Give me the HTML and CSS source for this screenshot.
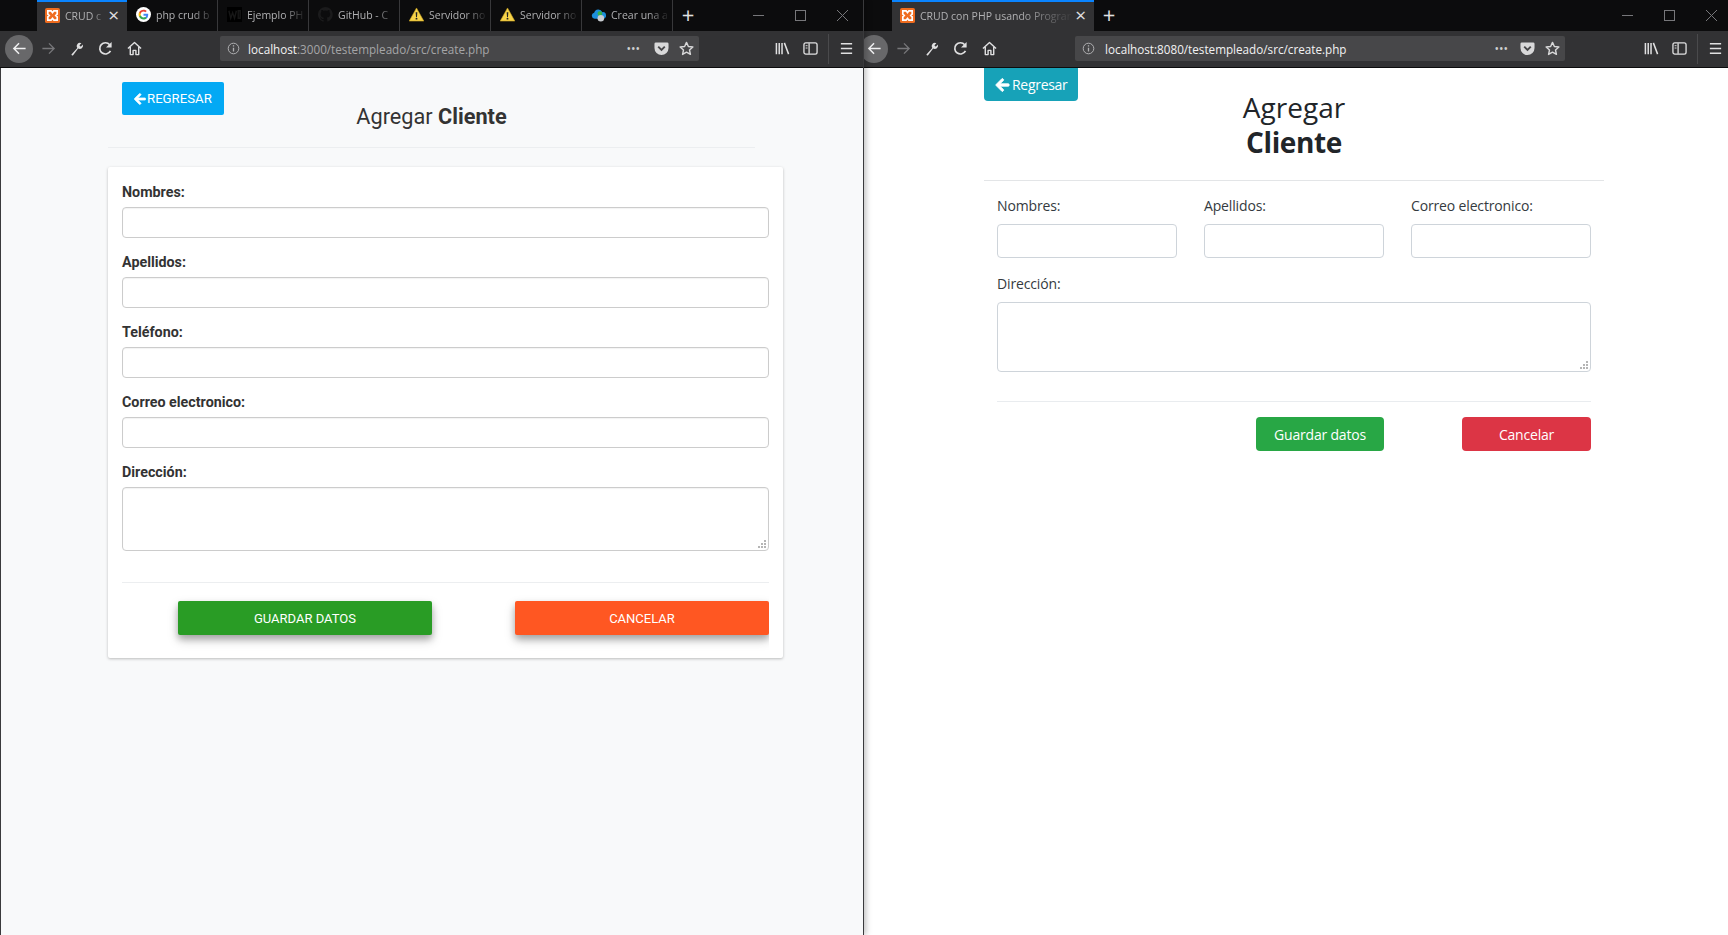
FILE: index.html
```html
<!DOCTYPE html>
<html lang="es">
<head>
    <meta charset="UTF-8">
    <title>Agregar Cliente</title>
    <link rel="stylesheet" href="styles.css">
</head>
<body>

<svg class="sprite" aria-hidden="true">
    <symbol id="i-xampp" viewBox="0 0 16 16">
        <rect width="16" height="16" rx="2" fill="#ef6c1f"/>
        <path d="M3 3h3.500l1.500 2 1.500-2H13v3.500L11.500 8 13 9.500V13H9.500L8 11 6.500 13H3V9.500L4.500 8 3 6.500z" fill="none" stroke="#fff" stroke-width="1.800"/>
    </symbol>
    <symbol id="i-google" viewBox="0 0 16 16">
        <circle cx="8" cy="8" r="8" fill="#fff"/>
        <path d="M13 8.200c0-.4 0-.7-.1-1H8v2h2.900c-.1.700-.5 1.200-1.100 1.600v1.300h1.700c1-.9 1.500-2.300 1.500-3.900z" fill="#4285f4"/>
        <path d="M8 13.200c1.400 0 2.600-.5 3.500-1.300l-1.700-1.300c-.5.300-1.100.5-1.800.5-1.400 0-2.500-.9-2.900-2.200H3.300v1.400c.9 1.700 2.700 2.900 4.700 2.900z" fill="#34a853"/>
        <path d="M5.100 8.900c-.2-.6-.2-1.200 0-1.800V5.700H3.300c-.7 1.500-.7 3.100 0 4.600z" fill="#fbbc05"/>
        <path d="M8 4.900c.8 0 1.500.3 2 .8l1.500-1.500C10.600 3.300 9.400 2.800 8 2.800c-2 0-3.800 1.200-4.700 2.900l1.800 1.400C5.500 5.800 6.600 4.900 8 4.900z" fill="#ea4335"/>
    </symbol>
    <symbol id="i-wix" viewBox="0 0 16 16">
        <rect width="16" height="16" fill="#000"/>
        <path d="M2 4l2 8 2-6 2 6 2-8M12 4h2v8h-2z" fill="none" stroke="#171717" stroke-width="1.500"/>
    </symbol>
    <symbol id="i-github" viewBox="0 0 16 16">
        <path d="M8 0a8 8 0 0 0-2.500 15.600c.4.100.5-.2.500-.4v-1.400c-2.200.5-2.700-1-2.700-1-.4-.9-.9-1.200-.9-1.200-.7-.5.100-.5.100-.5.800.1 1.200.8 1.200.8.700 1.200 1.900.9 2.300.7.100-.5.300-.9.500-1.100-1.800-.2-3.700-.9-3.700-4 0-.9.300-1.600.8-2.100-.1-.2-.4-1 .1-2.100 0 0 .7-.2 2.200.8a7.600 7.600 0 0 1 4 0c1.500-1 2.200-.8 2.200-.8.400 1.100.2 1.900.1 2.100.5.600.8 1.300.8 2.100 0 3.100-1.900 3.700-3.700 3.900.3.300.6.800.6 1.500v2.200c0 .2.100.5.600.4A8 8 0 0 0 8 0z" fill="#1b1b1c"/>
    </symbol>
    <symbol id="i-warn" viewBox="0 0 16 16">
        <path d="M8 1L15.800 15H.2z" fill="#f6d34a" stroke="#c9a21f" stroke-width=".6"/>
        <path d="M7.100 5.500h1.800L8.500 10.800h-1zM7.100 11.700h1.800v1.700H7.100z" fill="#222"/>
    </symbol>
    <symbol id="i-cloud" viewBox="0 0 16 16">
        <path d="M4 12.500a3.300 3.300 0 0 1-.6-6.500A4.500 4.500 0 0 1 12 5.500a3.500 3.500 0 0 1 1 7z" fill="#1c8fdc"/>
        <circle cx="9.500" cy="7" r="2.500" fill="#35b34a"/>
        <circle cx="10.500" cy="12" r="3.500" fill="#c9cdd1"/>
    </symbol>
    <symbol id="i-back" viewBox="0 0 16 16">
        <path d="M14.500 8H2M7.500 2.500L2 8l5.500 5.500" fill="none" stroke="currentColor" stroke-width="1.600"/>
    </symbol>
    <symbol id="i-forward" viewBox="0 0 16 16">
        <path d="M1.500 8H14M8.500 2.500L14 8l-5.500 5.500" fill="none" stroke="currentColor" stroke-width="1.400"/>
    </symbol>
    <symbol id="i-wrench" viewBox="0 0 16 16">
        <path d="M1.500 14.500l6.300-7a3.500 3.500 0 0 1 4.400-5.200L10 4.500l1.500 1.500 2.200-2.200a3.500 3.500 0 0 1-5 4.200l-5.400 7.200a1.300 1.300 0 0 1-1.800-.7z" fill="currentColor"/>
    </symbol>
    <symbol id="i-reload" viewBox="0 0 16 16">
        <path d="M13.300 10.500A6 6 0 1 1 12.500 4" fill="none" stroke="currentColor" stroke-width="1.800"/>
        <path d="M14.500 1v6h-6z" fill="currentColor"/>
    </symbol>
    <symbol id="i-home" viewBox="0 0 16 16">
        <path d="M1 8l7-6.500L15 8M3.500 6.500V14.500h3V10h3v4.500h3V6.500" fill="none" stroke="currentColor" stroke-width="1.500" stroke-linejoin="round"/>
    </symbol>
    <symbol id="i-info" viewBox="0 0 16 16">
        <circle cx="8" cy="8" r="6.500" fill="none" stroke="currentColor" stroke-width="1.200"/>
        <path d="M7.200 7h1.600v4.800H7.200zM7.200 4h1.600v1.600H7.200z" fill="currentColor"/>
    </symbol>
    <symbol id="i-pocket" viewBox="0 0 16 16">
        <path d="M2 1.500h12a1.500 1.500 0 0 1 1.500 1.500v4.500a7.500 7.500 0 0 1-15 0V3A1.500 1.500 0 0 1 2 1.500z" fill="currentColor"/>
        <path d="M4.500 6L8 9.500 11.500 6" fill="none" stroke="#474749" stroke-width="2"/>
    </symbol>
    <symbol id="i-star" viewBox="0 0 16 16">
        <path d="M8 1.500l2 4.400 4.800.5-3.600 3.200 1 4.700L8 11.900l-4.200 2.400 1-4.700L1.200 6.400 6 5.900z" fill="none" stroke="currentColor" stroke-width="1.500" stroke-linejoin="round"/>
    </symbol>
    <symbol id="i-library" viewBox="0 0 16 16">
        <path d="M1.500 2v12M4.500 2v12M7.500 2v12M10 2l4.500 12" fill="none" stroke="currentColor" stroke-width="1.600"/>
    </symbol>
    <symbol id="i-sidebar" viewBox="0 0 16 16">
        <rect x="1" y="2" width="14" height="12" rx="2" fill="none" stroke="currentColor" stroke-width="1.400"/>
        <path d="M6.500 2.500v11" stroke="currentColor" stroke-width="1.400"/>
        <path d="M2.800 5h2M2.800 7.500h2" stroke="currentColor" stroke-width="1"/>
    </symbol>
    <symbol id="i-menu" viewBox="0 0 16 16">
        <path d="M2 3h12M2 8h12M2 13h12" stroke="currentColor" stroke-width="1.700"/>
    </symbol>
    <symbol id="i-arrow" viewBox="-15 -15 478 542">
        <path d="M257.500 445.100l-22.200 22.200c-9.400 9.400-24.600 9.400-33.900 0L7 273c-9.400-9.400-9.400-24.600 0-33.900L201.400 44.700c9.400-9.400 24.600-9.400 33.900 0l22.200 22.200c9.500 9.500 9.300 25-.4 34.300L136.600 216H424c13.300 0 24 10.700 24 24v32c0 13.300-10.700 24-24 24H136.600l120.500 114.800c9.800 9.300 10 24.800.4 34.300z" fill="currentColor" stroke="currentColor" stroke-width="30"/>
    </symbol>
</svg>

<div class="desktop">

    <!-- ventana izquierda: version materialize -->
    <section class="window window-left">
        <div class="tabbar">
            <div class="tab tab-active">
                <svg class="favicon"><use href="#i-xampp"/></svg>
                <span class="tab-title">CRUD c</span>
                <span class="tab-close">&times;</span>
            </div>
            <div class="tab"><svg class="favicon"><use href="#i-google"/></svg><span class="tab-title">php crud b</span></div>
            <div class="tab"><svg class="favicon"><use href="#i-wix"/></svg><span class="tab-title">Ejemplo PH</span></div>
            <div class="tab"><svg class="favicon"><use href="#i-github"/></svg><span class="tab-title">GitHub - C</span></div>
            <div class="tab"><svg class="favicon"><use href="#i-warn"/></svg><span class="tab-title">Servidor no</span></div>
            <div class="tab"><svg class="favicon"><use href="#i-warn"/></svg><span class="tab-title">Servidor no</span></div>
            <div class="tab"><svg class="favicon"><use href="#i-cloud"/></svg><span class="tab-title">Crear una a</span></div>
            <span class="tab-new">+</span>
            <div class="win-controls">
                <span class="win-min"></span>
                <span class="win-max"></span>
                <span class="win-close"></span>
            </div>
        </div>
        <div class="navbar">
            <span class="nav-back"><svg class="icon"><use href="#i-back"/></svg></span>
            <svg class="icon icon-dim"><use href="#i-forward"/></svg>
            <svg class="icon"><use href="#i-wrench"/></svg>
            <svg class="icon"><use href="#i-reload"/></svg>
            <svg class="icon"><use href="#i-home"/></svg>
            <div class="urlbar">
                <svg class="icon-info"><use href="#i-info"/></svg>
                <span class="url"><span class="url-host">localhost</span><span class="url-rest">:3000/testempleado/src/create.php</span></span>
                <span class="url-dots">&bull;&bull;&bull;</span>
                <svg class="icon-url"><use href="#i-pocket"/></svg>
                <svg class="icon-url"><use href="#i-star"/></svg>
            </div>
            <svg class="icon icon-lib"><use href="#i-library"/></svg>
            <svg class="icon icon-side"><use href="#i-sidebar"/></svg>
            <span class="nav-sep"></span>
            <svg class="icon icon-menu"><use href="#i-menu"/></svg>
        </div>
        <main class="page page-left">
            <header class="m-head">
                <a class="m-back"><svg class="m-arrow"><use href="#i-arrow"/></svg>REGRESAR</a>
                <h2 class="m-title">Agregar <b>Cliente</b></h2>
            </header>
            <form class="m-card">
                <label class="m-label">Nombres:</label>
                <input class="m-input" type="text">
                <label class="m-label">Apellidos:</label>
                <input class="m-input" type="text">
                <label class="m-label">Teléfono:</label>
                <input class="m-input" type="text">
                <label class="m-label">Correo electronico:</label>
                <input class="m-input" type="text">
                <label class="m-label">Dirección:</label>
                <textarea class="m-input m-area"></textarea>
                <hr class="m-rule">
                <div class="m-actions">
                    <button type="button" class="m-btn m-green">GUARDAR DATOS</button>
                    <button type="button" class="m-btn m-orange">CANCELAR</button>
                </div>
            </form>
        </main>
    </section>

    <!-- ventana derecha: version bootstrap -->
    <section class="window window-right">
        <div class="tabbar">
            <div class="tab tab-active tab-wide">
                <svg class="favicon"><use href="#i-xampp"/></svg>
                <span class="tab-title">CRUD con PHP usando Prograr</span>
                <span class="tab-close">&times;</span>
            </div>
            <span class="tab-new">+</span>
            <div class="win-controls">
                <span class="win-min"></span>
                <span class="win-max"></span>
                <span class="win-close"></span>
            </div>
        </div>
        <div class="navbar">
            <span class="nav-back"><svg class="icon"><use href="#i-back"/></svg></span>
            <svg class="icon icon-dim"><use href="#i-forward"/></svg>
            <svg class="icon"><use href="#i-wrench"/></svg>
            <svg class="icon"><use href="#i-reload"/></svg>
            <svg class="icon"><use href="#i-home"/></svg>
            <div class="urlbar">
                <svg class="icon-info"><use href="#i-info"/></svg>
                <span class="url url-full">localhost:8080/testempleado/src/create.php</span>
                <span class="url-dots">&bull;&bull;&bull;</span>
                <svg class="icon-url"><use href="#i-pocket"/></svg>
                <svg class="icon-url"><use href="#i-star"/></svg>
            </div>
            <svg class="icon icon-lib"><use href="#i-library"/></svg>
            <svg class="icon icon-side"><use href="#i-sidebar"/></svg>
            <span class="nav-sep"></span>
            <svg class="icon icon-menu"><use href="#i-menu"/></svg>
        </div>
        <main class="page page-right">
            <a class="b-back"><svg class="b-arrow"><use href="#i-arrow"/></svg>Regresar</a>
            <h2 class="b-title">Agregar<br><b>Cliente</b></h2>
            <form class="b-form">
                <div class="b-row">
                    <div class="b-col"><label class="b-label">Nombres:</label><input class="b-input" type="text"></div>
                    <div class="b-col"><label class="b-label">Apellidos:</label><input class="b-input" type="text"></div>
                    <div class="b-col"><label class="b-label">Correo electronico:</label><input class="b-input" type="text"></div>
                </div>
                <label class="b-label">Dirección:</label>
                <textarea class="b-input b-area"></textarea>
                <hr class="b-rule">
                <div class="b-actions">
                    <button type="button" class="b-btn b-green">Guardar datos</button>
                    <button type="button" class="b-btn b-red">Cancelar</button>
                </div>
            </form>
        </main>
    </section>

</div>

</body>
</html>
```

FILE: styles.css
```css
* {
    box-sizing: border-box;
}

body {
    margin: 0;
    height: 935px;
    overflow: hidden;
    background-color: #fff;
}

.sprite {
    display: none;
}

.desktop {
    display: flex;
    height: 935px;
}

.window {
    display: flex;
    flex-direction: column;
    width: 864px;
    height: 935px;
    overflow: hidden;
    font-family: "Open Sans", "Noto Sans", sans-serif;
}

.window-left {
    position: relative;
    z-index: 1;
    border-right: 1px solid #3a3a3c;
    box-shadow: 2px 0 6px rgba(0, 0, 0, 0.25);
}

/* barra de pestañas */
.tabbar {
    display: flex;
    align-items: stretch;
    flex: none;
    height: 31px;
    background-color: #0c0c0d;
    color: #b1b1b3;
    font-size: 10.500px;
}

.window-left .tabbar {
    padding-left: 37px;
}

.window-right .tabbar {
    padding-left: 28px;
}

.tab {
    display: flex;
    align-items: center;
    width: 91px;
    padding: 0 2px 2px 9px;
    border-right: 1px solid #38383a;
    overflow: hidden;
}

.tab-active {
    width: 90px;
    border-top: 2px solid #0a84ff;
    border-right: none;
    background-color: #323234;
    padding: 0 8px 2px 8px;
}

.tab-wide {
    width: 202px;
}

.tab-title {
    flex: 1;
    padding-left: 5px;
    white-space: nowrap;
    overflow: hidden;
    -webkit-mask-image: linear-gradient(to right, #000 65%, transparent 100%);
    mask-image: linear-gradient(to right, #000 65%, transparent 100%);
}

.favicon {
    flex: none;
    width: 15px;
    height: 15px;
}

.tab-close {
    flex: none;
    font-size: 19px;
    line-height: 1;
    color: #e0e0e1;
}

.tab-new {
    width: 30px;
    text-align: center;
    font-size: 22px;
    line-height: 28px;
    color: #e0e0e1;
}

.win-controls {
    display: flex;
    align-items: center;
    gap: 31px;
    margin-left: auto;
}

.window-left .win-controls {
    padding-right: 15px;
}

.window-right .win-controls {
    padding-right: 11px;
}

.win-controls span {
    display: block;
    width: 11px;
    height: 11px;
}

.win-min {
    border-bottom: 1px solid #77777a;
    transform: translateY(-5px);
}

.win-max {
    border: 1px solid #77777a;
}

.win-close {
    background:
        linear-gradient(45deg, transparent 46%, #77777a 46%, #77777a 54%, transparent 54%),
        linear-gradient(-45deg, transparent 46%, #77777a 46%, #77777a 54%, transparent 54%);
}

/* barra de navegacion */
.navbar {
    display: flex;
    align-items: center;
    flex: none;
    height: 37px;
    padding-bottom: 1px;
    background-color: #323234;
    border-bottom: 1px solid #0c0c0d;
    color: #e0e0e1;
}

.window-left .navbar {
    padding-left: 5px;
}

.window-right .navbar {
    padding-left: 0;
}

.window-right .nav-back {
    margin-left: -4px;
}

.nav-back {
    display: flex;
    align-items: center;
    justify-content: center;
    flex: none;
    width: 28px;
    height: 28px;
    border-radius: 50%;
    background-color: #68686a;
    color: #f0f0f1;
}

.icon {
    flex: none;
    width: 15px;
    height: 15px;
    margin-left: 13.700px;
}

.nav-back .icon {
    margin-left: 0;
}

.nav-back + .icon {
    margin-left: 8px;
}

.icon-dim {
    color: #77777a;
}

.urlbar {
    display: flex;
    align-items: center;
    flex: none;
    height: 25px;
    padding: 0 5px 0 7px;
    background-color: #474749;
    border-radius: 2px;
}

.window-left .urlbar {
    width: 479px;
    margin-left: 78px;
}

.window-right .urlbar {
    width: 490px;
    margin-left: 78px;
}

.icon-info {
    flex: none;
    width: 13px;
    height: 13px;
    color: #b1b1b3;
}

.url {
    flex: 1;
    padding-left: 8px;
    font-size: 11.700px;
    white-space: nowrap;
}

.window-right .url {
    padding-left: 10px;
}

.url-host,
.url-full {
    color: #f2f2f3;
}

.url-rest {
    color: #a5a5a7;
}

.url-dots {
    font-size: 12px;
    color: #d0d0d1;
    margin-right: 4px;
}

.window-right .url-dots {
    margin-right: 2px;
}

.icon-url {
    flex: none;
    width: 15px;
    height: 15px;
    margin-left: 10px;
    color: #d8d8d9;
}

.icon-lib {
    margin-left: 76px;
}

.window-right .icon-lib {
    margin-left: 79px;
}

.icon-side {
    margin-left: 13px;
}

.nav-sep {
    flex: none;
    width: 1px;
    height: 30px;
    margin-left: 10px;
    background-color: #4a4a4c;
}

.icon-menu {
    margin-left: 10px;
}

/* pagina */
.page {
    flex: 1;
}

.page-left {
    background-color: #f8f9fa;
    border-left: 1px solid #3a3a3c;
    padding-top: 14px;
    font-family: Roboto, sans-serif;
    color: #333;
}

.m-head {
    display: grid;
    width: 647px;
    height: 66px;
    margin-left: 107px;
    border-bottom: 1px solid #eceef0;
}

.m-back,
.m-title {
    grid-area: 1 / 1;
}

.m-back {
    display: flex;
    align-items: center;
    justify-self: start;
    width: 102px;
    height: 33px;
    margin-left: 14px;
    padding-left: 12px;
    border-radius: 2px;
    background-color: #03a9f4;
    color: #fff;
    font-size: 13.200px;
}

.m-arrow {
    width: 12px;
    height: 14px;
    margin-right: 1px;
}

.m-title {
    justify-self: center;
    margin: 21px 0 0;
    font-size: 21.700px;
    line-height: 28px;
    font-weight: 400;
    color: #333;
}

.m-card {
    display: flex;
    flex-direction: column;
    width: 675px;
    margin: 19px 0 0 107px;
    padding: 15px 14px 0;
    background-color: #fff;
    border-radius: 2px;
    box-shadow: 0 1px 3px rgba(0, 0, 0, 0.25);
}

.m-label {
    height: 20px;
    margin-bottom: 5px;
    font-size: 14.300px;
    line-height: 20px;
    font-weight: 700;
}

.m-input {
    display: block;
    width: 100%;
    height: 31px;
    margin-bottom: 14px;
    border: 1px solid #ccc;
    border-radius: 4px;
    background-color: #fff;
    box-shadow: inset 0 1px 1px rgba(0, 0, 0, 0.05);
}

/* el agarrador del textarea son seis puntos */
.m-area,
.b-area {
    resize: none;
    background-image:
        linear-gradient(#b5b5b5, #b5b5b5), linear-gradient(#b5b5b5, #b5b5b5),
        linear-gradient(#b5b5b5, #b5b5b5), linear-gradient(#b5b5b5, #b5b5b5),
        linear-gradient(#b5b5b5, #b5b5b5), linear-gradient(#b5b5b5, #b5b5b5);
    background-size: 2px 2px;
    background-repeat: no-repeat;
    background-position:
        right 2px bottom 2px, right 5px bottom 2px, right 8px bottom 2px,
        right 2px bottom 5px, right 5px bottom 5px, right 2px bottom 8px;
}

.m-area {
    height: 64px;
    margin-bottom: 31px;
}

.m-rule {
    width: 100%;
    margin: 0;
    border: none;
    border-top: 1px solid #eceef0;
}

.m-actions {
    display: flex;
    justify-content: flex-end;
    gap: 83px;
    padding: 18px 0 23px;
    overflow: hidden;
}

.m-btn {
    width: 254px;
    height: 34px;
    padding: 0;
    border: none;
    border-radius: 2px;
    color: #fff;
    font-family: Roboto, sans-serif;
    font-size: 13px;
    font-weight: 400;
    box-shadow: 0 5px 11px rgba(0, 0, 0, 0.22), 0 4px 6px rgba(0, 0, 0, 0.2);
}

.m-green {
    background-color: #299c25;
}

.m-orange {
    background-color: #ff5722;
}

.page-right {
    padding: 0 124px 0 120px;
    background-color: #fff;
    color: #212529;
}

.b-back {
    display: flex;
    align-items: center;
    width: 94px;
    height: 33px;
    padding-left: 11px;
    border-radius: 0 0 4px 4px;
    background-color: #17a2b8;
    color: #fff;
    font-size: 14px;
    letter-spacing: -0.300px;
}

.b-arrow {
    width: 15px;
    height: 16px;
    margin-right: 2px;
}

.b-title {
    height: 90px;
    margin: -11px 0 0;
    text-align: center;
    font-size: 28px;
    line-height: 35px;
    font-weight: 400;
    border-bottom: 1px solid #e3e5e7;
    box-sizing: content-box;
}

.b-title b {
    letter-spacing: -0.400px;
}

.b-form {
    padding: 15px 13px 0;
}

.b-row {
    display: grid;
    grid-template-columns: repeat(3, 180px);
    column-gap: 27px;
}

.b-label {
    display: block;
    height: 20px;
    margin-bottom: 8px;
    font-size: 14px;
    line-height: 20px;
    letter-spacing: -0.150px;
    color: #343a40;
}

.b-input {
    display: block;
    width: 100%;
    height: 34px;
    margin-bottom: 16px;
    border: 1px solid #ced4da;
    border-radius: 4px;
    background-color: #fff;
}

.b-area {
    height: 70px;
    margin-bottom: 29px;
}

.b-rule {
    margin: 0;
    border: none;
    border-top: 1px solid #e9ecef;
}

.b-actions {
    display: flex;
    justify-content: flex-end;
    gap: 78px;
    padding-top: 15px;
}

.b-btn {
    height: 34px;
    padding: 0;
    border: none;
    border-radius: 4px;
    color: #fff;
    font-family: "Open Sans", sans-serif;
    font-size: 14px;
    letter-spacing: -0.200px;
}

.b-green {
    width: 128px;
    background-color: #28a745;
}

.b-red {
    width: 129px;
    background-color: #dc3545;
}
```
